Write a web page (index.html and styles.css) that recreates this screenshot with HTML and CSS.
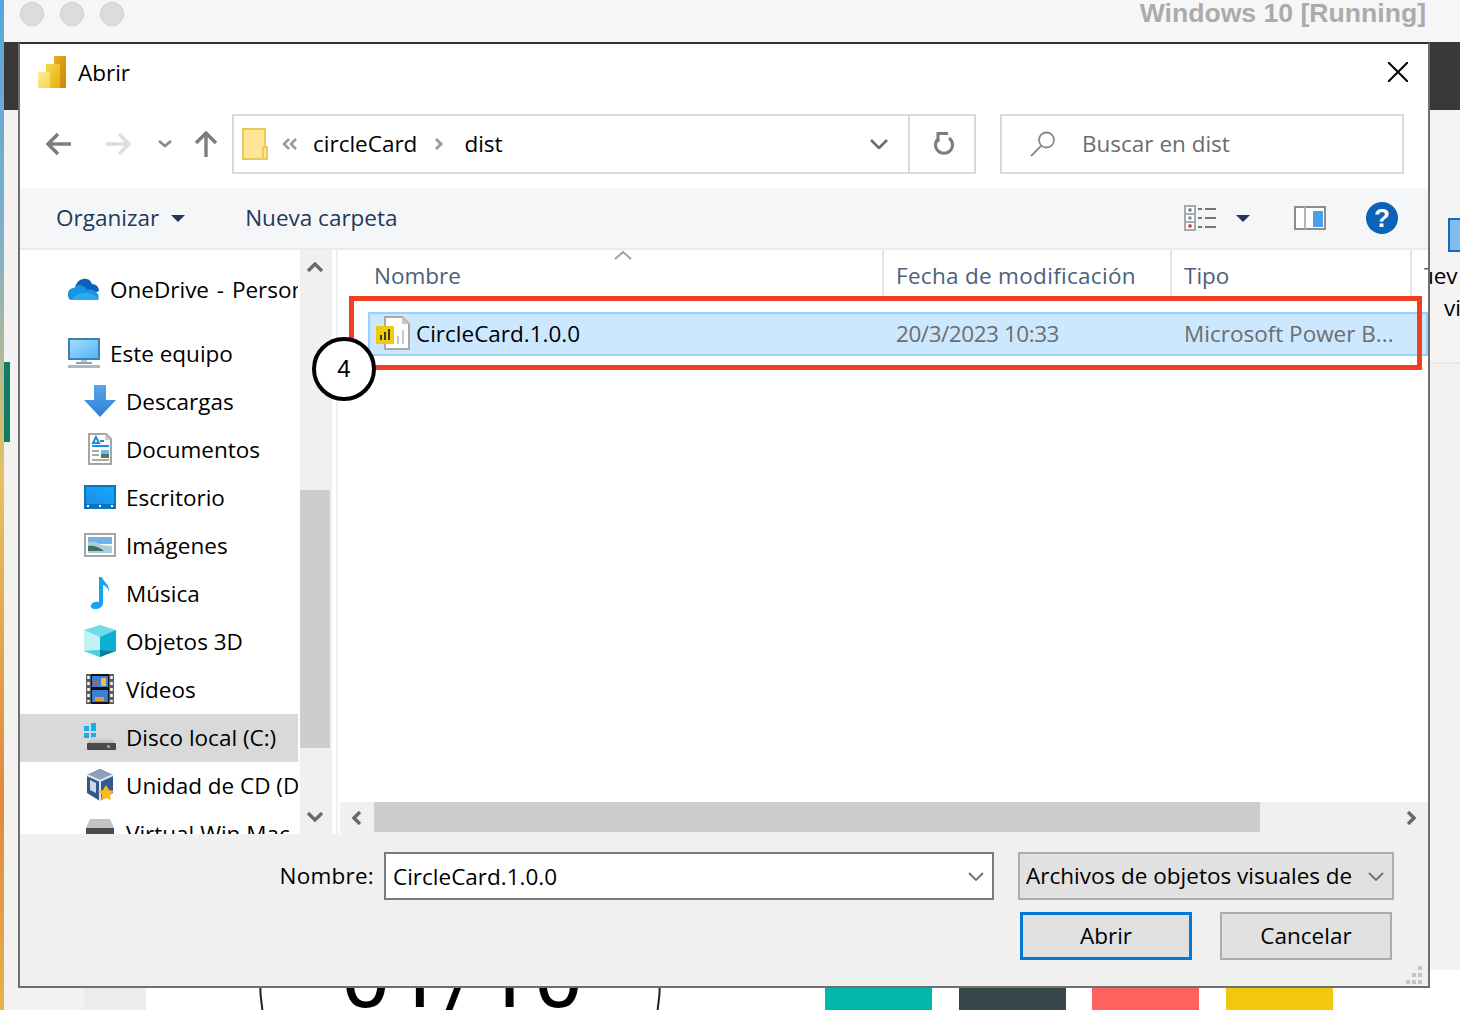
FILE: index.html
```html
<!DOCTYPE html>
<html lang="en">
<head>
    <meta charset="UTF-8">
    <meta name="viewport" content="width=device-width, initial-scale=1.0">
    <title>Abrir</title>
    <link rel="stylesheet" href="styles.css">
</head>
<body>
    <!-- host window behind the dialog -->
    <div class="host">
        <div class="host-title">
            <span class="light"></span><span class="light"></span><span class="light"></span>
            <span class="vm-name">Windows 10 [Running]</span>
        </div>
        <div class="host-ribbon"></div>
        <div class="host-report">
            <div class="side-tab"></div>
            <div class="pane-right">
                <div class="pane-box"></div>
                <div class="pane-text">Nuev<br><span class="pane-second">vi</span></div>
            </div>
            <div class="page-gutter"></div>
            <div class="page-sheet"></div>
            <div class="gauge"></div>
            <div class="big-date">01/10</div>
            <div class="tiles">
                <span class="tile teal"></span>
                <span class="tile slate"></span>
                <span class="tile coral"></span>
                <span class="tile gold"></span>
            </div>
        </div>
    </div>

    <div class="dialog">
        <div class="title-row">
            <svg class="app-icon" width="28" height="32" viewBox="0 0 28 32">
                <defs>
                    <linearGradient id="pbiDark" x1="0" y1="0" x2="1" y2="1"><stop offset="0" stop-color="#e8b020"/><stop offset="1" stop-color="#c98508"/></linearGradient>
                    <linearGradient id="pbiMid" x1="0" y1="0" x2="1" y2="1"><stop offset="0" stop-color="#f9d84c"/><stop offset="1" stop-color="#e6ae10"/></linearGradient>
                    <linearGradient id="pbiLight" x1="0" y1="0" x2="1" y2="1"><stop offset="0" stop-color="#fdec9a"/><stop offset="1" stop-color="#f6d452"/></linearGradient>
                </defs>
                <rect x="16" width="12" height="32" fill="url(#pbiDark)"/>
                <rect x="8" y="8" width="14" height="24" fill="url(#pbiMid)"/>
                <rect y="16" width="12" height="16" fill="url(#pbiLight)"/>
            </svg>
            <span class="title-text">Abrir</span>
            <svg class="close-icon" width="20" height="20" viewBox="0 0 20 20">
                <path d="M0 0 20 20M20 0 0 20" stroke="#000" stroke-width="2" fill="none"/>
            </svg>
        </div>

        <div class="nav-row">
            <svg class="nav-btn back" width="26" height="24" viewBox="0 0 26 24"><path d="M12 2 2 12l10 10M2 12h23" stroke="#7d7d7d" stroke-width="3.400" fill="none"/></svg>
            <svg class="nav-btn forward" width="26" height="24" viewBox="0 0 26 24"><path d="M14 2l10 10-10 10M24 12H1" stroke="#dedede" stroke-width="3.400" fill="none"/></svg>
            <svg class="nav-btn recent" width="14" height="8" viewBox="0 0 14 8"><path d="M1 1l6 5 6-5" stroke="#8a8a8a" stroke-width="2.800" fill="none"/></svg>
            <svg class="nav-btn up" width="24" height="26" viewBox="0 0 24 26"><path d="M2 12 12 2l10 10M12 2v24" stroke="#7d7d7d" stroke-width="3.400" fill="none"/></svg>
            <div class="address">
                <svg class="folder" width="26" height="32" viewBox="0 0 26 32">
                    <rect x="1" y="1" width="22" height="30" fill="#fde797" stroke="#eec759" stroke-width="2"/>
                    <rect x="21" y="19" width="4" height="12" fill="#fde797" stroke="#eec759" stroke-width="2"/>
                </svg>
                <svg class="crumb-back" width="16" height="12" viewBox="0 0 16 12"><path d="M7 1 2 6l5 5M14 1 9 6l5 5" stroke="#9a9a9a" stroke-width="2.600" fill="none"/></svg>
                <span class="crumb">circleCard</span>
                <svg class="crumb-sep" width="8" height="12" viewBox="0 0 8 12"><path d="M1 1l5 5-5 5" stroke="#9a9a9a" stroke-width="3" fill="none"/></svg>
                <span class="crumb">dist</span>
                <svg class="address-drop" width="18" height="10" viewBox="0 0 18 10"><path d="M1 1l8 8 8-8" stroke="#707070" stroke-width="2.800" fill="none"/></svg>
                <div class="refresh">
                    <svg width="22" height="24" viewBox="0 0 22 24"><path d="M6 6A8.500 8.500 0 1 0 16 6M5 10V1.500H15" stroke="#7d7d7d" stroke-width="3" fill="none"/></svg>
                </div>
            </div>
            <div class="search">
                <svg width="26" height="26" viewBox="0 0 26 26"><circle cx="16.500" cy="9" r="7.500" stroke="#8a8a8a" stroke-width="1.800" fill="none"/><path d="M11 15 1 25" stroke="#8a8a8a" stroke-width="1.800"/></svg>
                <span class="search-text">Buscar en dist</span>
            </div>
        </div>

        <div class="toolbar">
            <span class="tool">Organizar</span>
            <span class="caret organize-caret"></span>
            <span class="tool new-folder">Nueva carpeta</span>
            <svg class="view-icon" width="32" height="26" viewBox="0 0 32 26">
                <rect x="1" y="1" width="10" height="24" fill="#fff" stroke="#a9a9a9" stroke-width="2"/>
                <path d="M1 9h10M1 17h10" stroke="#a9a9a9" stroke-width="2"/>
                <rect x="4.500" y="3.500" width="3" height="3" fill="#6d6d6d"/>
                <rect x="4.500" y="11.500" width="3" height="3" fill="#4d8fdc"/>
                <rect x="4.500" y="19.500" width="3" height="3" fill="#c8242b"/>
                <path d="M14 4h4M21 4h11M14 13h4M21 13h11M14 22h4M21 22h11" stroke="#777" stroke-width="2"/>
            </svg>
            <span class="caret view-caret"></span>
            <svg class="pane-icon" width="32" height="24" viewBox="0 0 32 24">
                <rect x="1" y="1" width="30" height="22" fill="#fff" stroke="#8d8d8d" stroke-width="2"/>
                <rect x="10" y="1" width="2" height="22" fill="#b5b5b5"/>
                <rect x="19" y="5" width="10" height="16" fill="#4b9fe6"/>
            </svg>
            <div class="help">?</div>
        </div>

        <div class="browser">
            <div class="nav-tree">
                <div class="tree-row top onedrive">
                    <svg width="32" height="22" viewBox="0 0 32 22"><path d="M7 10c1-6 6-10 11-9 3 0 5 2 6 5 4 0 7 3 7 7L14 20z" fill="#0b62b8"/><path d="M3 22c-3-1-3-4-3-6 0-4 3-6 6-6 2-3 6-4 9-2 2 1 3 2 4 4 4-1 8 0 10 3 2 2 2 5 1 7z" fill="#1496e4"/><path d="M3 22c3-5 9-7 14-7 6 0 11 2 14 7z" fill="#2aabf0"/></svg>
                    <span>OneDrive - Personal</span>
                </div>
                <div class="tree-row top gap">
                    <svg width="32" height="30" viewBox="0 0 32 30">
                        <defs><linearGradient id="screen" x1="0" y1="0" x2="1" y2="1"><stop offset="0" stop-color="#a8dcff"/><stop offset="1" stop-color="#4fb4f8"/></linearGradient></defs>
                        <rect x="1" y="1" width="30" height="20" fill="url(#screen)" stroke="#3f7fae" stroke-width="2"/>
                        <rect x="13" y="22" width="6" height="2" fill="#b9c6d0"/>
                        <rect x="8" y="24" width="16" height="2" fill="#8aa3b5"/>
                        <rect y="27" width="32" height="3" fill="#a9b7c2"/>
                    </svg>
                    <span>Este equipo</span>
                </div>
                <div class="tree-row">
                    <svg width="32" height="32" viewBox="0 0 32 32">
                        <defs><linearGradient id="dl" x1="0" y1="0" x2="0" y2="1"><stop offset="0" stop-color="#58a6ea"/><stop offset="1" stop-color="#2d80d8"/></linearGradient></defs>
                        <path d="M10 0h12v15h10L16 32 0 15h10z" fill="url(#dl)"/>
                    </svg>
                    <span>Descargas</span>
                </div>
                <div class="tree-row">
                    <svg width="32" height="32" viewBox="0 0 32 32"><path d="M5 1h17l5 5v25H5z" fill="#fff" stroke="#a5a5a5" stroke-width="2"/><path d="M21 1v6h6z" fill="#c9c9c9"/><path d="M12 4l-3 6h6zM16 8h4" stroke="#1f8edb" stroke-width="2" fill="none"/><path d="M8 13h17" stroke="#1f8edb" stroke-width="2"/><path d="M8 18h7M8 22h7M8 27h17" stroke="#a9a9a9" stroke-width="2"/><rect x="17" y="17" width="8" height="4" fill="#74b6ea"/><rect x="17" y="21" width="8" height="4" fill="#4f7f5a"/></svg>
                    <span>Documentos</span>
                </div>
                <div class="tree-row">
                    <svg width="32" height="24" viewBox="0 0 32 24">
                        <defs><linearGradient id="desk" x1="0" y1="1" x2="1" y2="0"><stop offset="0" stop-color="#1c8fe8"/><stop offset="1" stop-color="#12a8ff"/></linearGradient></defs>
                        <rect width="32" height="24" fill="#0e73bd"/>
                        <rect x="2" y="2" width="28" height="17" fill="url(#desk)"/>
                        <rect x="3" y="20" width="2" height="2" fill="#fff"/><rect x="15" y="20" width="2" height="2" fill="#fff"/><rect x="27" y="20" width="2" height="2" fill="#fff"/>
                    </svg>
                    <span>Escritorio</span>
                </div>
                <div class="tree-row">
                    <svg width="32" height="24" viewBox="0 0 32 24"><rect x="1" y="1" width="30" height="22" fill="#fff" stroke="#a5a5a5" stroke-width="2"/><rect x="4" y="4" width="24" height="7" fill="#6fb3e8"/><path d="M4 9c6-1 10 1 14 3l10 1v7H4z" fill="#a9cfdc"/><path d="M4 13c7-1 12 2 16 5H4z" fill="#3f6f5c"/></svg>
                    <span>Imágenes</span>
                </div>
                <div class="tree-row">
                    <svg width="24" height="32" viewBox="0 0 24 32"><path d="M11 0h3c1 5 8 7 7 15-1-4-3-6-6-7v18c0 4-4 6-8 6-3 0-5-2-4-4 1-3 5-4 8-3z" fill="#17a2f5"/></svg>
                    <span>Música</span>
                </div>
                <div class="tree-row">
                    <svg width="32" height="32" viewBox="0 0 32 32"><path d="M16 0 32 5v21l-16 6L0 26V5z" fill="#72dbe8"/><path d="M0 5l16 7v13L0 26z" fill="#c4f1f3"/><path d="M32 5l-16 7v13l16 1z" fill="#0cb0d4"/><path d="M16 25l16 1-16 6z" fill="#0a7c9c"/><path d="M16 25 0 26l16 6z" fill="#4fd0de"/></svg>
                    <span>Objetos 3D</span>
                </div>
                <div class="tree-row">
                    <svg width="28" height="30" viewBox="0 0 28 30"><rect width="28" height="30" fill="#5d5d5d"/><rect x="5" width="18" height="30" fill="#111"/><rect x="6" y="2" width="16" height="11" fill="#3c7fd6"/><rect x="6" y="16" width="16" height="12" fill="#3c7fd6"/><rect x="8" y="7" width="4" height="5" fill="#d8503f"/><rect x="15" y="4" width="5" height="8" fill="#e8c23a"/><rect x="9" y="23" width="9" height="4" fill="#e0a02f"/><path d="M2.500 2v26M25.500 2v26" stroke="#fff" stroke-width="2.400" stroke-dasharray="3 3"/></svg>
                    <span>Vídeos</span>
                </div>
                <div class="tree-row selected">
                    <svg width="32" height="28" viewBox="0 0 32 28">
                        <defs><linearGradient id="drive" x1="0" y1="0" x2="0" y2="1"><stop offset="0" stop-color="#dcdcdc"/><stop offset="1" stop-color="#b5b5b5"/></linearGradient></defs>
                        <path d="M0 3h5v5H0zM7 0h5v8H7zM0 10h5v5H0zM7 10h5v5H7z" fill="#12aef0"/>
                        <path d="M8 14h19l4 7H3z" fill="url(#drive)"/>
                        <rect x="3" y="20" width="29" height="7" rx="1" fill="#4a4a4a"/>
                        <rect x="23" y="22" width="3" height="3" fill="#34d058"/>
                    </svg>
                    <span>Disco local (C:)</span>
                </div>
                <div class="tree-row">
                    <svg width="30" height="32" viewBox="0 0 30 32"><path d="M15 0 28 6v18l-13 8L2 24V6z" fill="#33588e"/><path d="M15 0 28 6 15 12 2 6z" fill="#8aa0bd"/><path d="M15 12v20M2 6l13 6 13-6" stroke="#dfe6ef" stroke-width="2" fill="none"/><path d="M5 11l6 3v10l-6-3z" fill="#cfd8e4"/><path d="M21 16l3 5 5 1-4 4 1 5-5-2-5 2 1-5-4-4 5-1z" fill="#f9b824"/></svg>
                    <span>Unidad de CD (D:)</span>
                </div>
                <div class="tree-row">
                    <svg width="28" height="28" viewBox="0 0 28 28"><path d="M4 0h20l4 9H0z" fill="#c4c4c4"/><rect y="9" width="28" height="8" fill="#4a4a4a"/></svg>
                    <span>Virtual Win Mac</span>
                </div>
            </div>
            <div class="v-scroll">
                <svg class="v-arrow" width="16" height="10" viewBox="0 0 16 10"><path d="M1 9l7-7 7 7" stroke="#6a6a6a" stroke-width="3.400" fill="none"/></svg>
                <div class="v-thumb"></div>
                <svg class="v-arrow down" width="16" height="10" viewBox="0 0 16 10"><path d="M1 1l7 7 7-7" stroke="#6a6a6a" stroke-width="3.400" fill="none"/></svg>
            </div>
            <div class="split"></div>
            <div class="files">
                <div class="file-head">
                    <div class="col first">Nombre
                        <svg class="sort" width="18" height="10" viewBox="0 0 18 10"><path d="M1 9l8-7 8 7" stroke="#a0a0a0" stroke-width="2" fill="none"/></svg>
                    </div>
                    <div class="col date-col">Fecha de modificación</div>
                    <div class="col">Tipo</div>
                    <div class="col last">Tamaño</div>
                </div>
                <div class="file-row">
                    <div class="file-name">
                        <svg width="34" height="34" viewBox="0 0 34 34">
                            <path d="M9 1h17l7 7v25H9z" fill="#fff" stroke="#a9a9a9" stroke-width="2"/>
                            <path d="M26 1v7h7z" fill="#c9c9c9"/>
                            <path d="M27 14v14M22 20v8" stroke="#c9c9c9" stroke-width="2"/>
                            <rect y="10" width="18" height="18" fill="#f2c811"/>
                            <path d="M5 19v5M9 16v8M13 13v11" stroke="#3d3d1f" stroke-width="2"/>
                        </svg>
                        <span>CircleCard.1.0.0</span>
                    </div>
                    <div class="file-meta file-date">20/3/2023 10:33</div>
                    <div class="file-meta">Microsoft Power B...</div>
                </div>
                <div class="file-space"></div>
                <div class="h-scroll">
                    <svg class="h-arrow" width="10" height="14" viewBox="0 0 10 14"><path d="M8 1 2 7l6 6" stroke="#6a6a6a" stroke-width="3.400" fill="none"/></svg>
                    <div class="h-thumb"></div>
                    <svg class="h-arrow end" width="10" height="14" viewBox="0 0 10 14"><path d="M2 1l6 6-6 6" stroke="#6a6a6a" stroke-width="3.400" fill="none"/></svg>
                </div>
            </div>
        </div>

        <div class="footer">
            <div class="footer-line">
                <span class="name-label">Nombre:</span>
                <div class="name-input">
                    <span>CircleCard.1.0.0</span>
                    <svg width="16" height="9" viewBox="0 0 16 9"><path d="M1 1l7 7 7-7" stroke="#707070" stroke-width="1.800" fill="none"/></svg>
                </div>
                <div class="type-select">
                    <span class="type-text">Archivos de objetos visuales de</span>
                    <svg width="16" height="9" viewBox="0 0 16 9"><path d="M1 1l7 7 7-7" stroke="#707070" stroke-width="1.800" fill="none"/></svg>
                </div>
            </div>
            <div class="footer-buttons">
                <div class="btn primary">Abrir</div>
                <div class="btn">Cancelar</div>
            </div>
            <svg class="grip" width="18" height="18" viewBox="0 0 18 18"><path d="M12 0h4v4h-4zM6 7h4v4H6zM12 7h4v4h-4zM0 14h4v4H0zM6 14h4v4H6zM12 14h4v4h-4z" fill="#c4c4c4"/></svg>
        </div>

        <!-- annotation on top of the file row -->
        <div class="callout"></div>
        <div class="step">4</div>
    </div>
</body>
</html>
```

FILE: styles.css
```css
html {
    overflow: hidden;
}

body {
    margin: 0;
    width: 1460px;
    height: 1010px;
    position: relative;
    overflow: hidden;
    background: linear-gradient(to bottom, #5aa5dc 0, #7fb0c8 240px, #e5c25f 480px, #e08a3a 800px, #e5b04f 1010px);
    font-family: "Open Sans", "Noto Sans", sans-serif;
    font-size: 22.5px;
    color: #000;
}

.host {
    margin-left: 4px;
    height: 1010px;
    display: flex;
    flex-direction: column;
}

.host-title {
    height: 42px;
    flex: none;
    background: #f6f6f6;
    display: flex;
    align-items: flex-start;
    gap: 16px;
    padding: 2px 34px 0 16px;
    box-sizing: border-box;
}

.light {
    width: 24px;
    height: 24px;
    border-radius: 50%;
    background: #dcdcdc;
    border: 1px solid #c9c9c9;
    box-sizing: border-box;
}

.vm-name {
    margin-left: auto;
    font-family: "Liberation Sans", sans-serif;
    font-weight: bold;
    font-size: 26.6px;
    line-height: 22px;
    color: #ababab;
}

.host-ribbon {
    height: 68px;
    flex: none;
    background: #3a3836;
}

.host-report {
    flex: 1;
    position: relative;
    overflow: hidden;
    background: #f3f2f1;
}

.side-tab {
    position: absolute;
    left: 0;
    top: 252px;
    width: 6px;
    height: 80px;
    background: #107c68;
}

.pane-right {
    position: absolute;
    left: 1426px;
    top: 0;
    width: 30px;
    height: 252px;
    background: #f5f4f3;
    border-bottom: 2px solid #e8e8e8;
    overflow: hidden;
}

.pane-box {
    position: absolute;
    left: 18px;
    top: 108px;
    width: 14px;
    height: 30px;
    background: #83bbec;
    border: 2px solid #0f6cbd;
}

.pane-text {
    position: absolute;
    left: -27px;
    top: 150px;
    font-size: 22.5px;
    line-height: 32px;
    white-space: nowrap;
}

.pane-second {
    margin-left: 41px;
}

.page-gutter {
    position: absolute;
    left: 80px;
    top: 860px;
    width: 62px;
    height: 40px;
    background: #ececec;
}

.page-sheet {
    position: absolute;
    left: 142px;
    top: 860px;
    right: 0;
    height: 40px;
    background: #fff;
}

.gauge {
    position: absolute;
    left: 255px;
    top: 668px;
    width: 402px;
    height: 402px;
    border: 2px solid #222;
    border-radius: 50%;
    box-sizing: border-box;
}

.big-date {
    position: absolute;
    left: 337px;
    top: 823px;
    font-family: Roboto, sans-serif;
    font-size: 88px;
    line-height: 88px;
    letter-spacing: 2px;
    color: #000;
    white-space: nowrap;
}

.tiles {
    position: absolute;
    left: 821px;
    top: 870px;
    display: flex;
    gap: 26.5px;
}

.tile {
    width: 107px;
    height: 30px;
}

.teal { background: #01b8aa; }
.slate { background: #374649; }
.coral { background: #fd625e; }
.gold { background: #f2c80f; }

/* dialog */
.dialog {
    position: absolute;
    left: 18px;
    top: 42px;
    width: 1412px;
    height: 946px;
    box-sizing: border-box;
    border: 2px solid #6f6f6f;
    border-top-color: #333;
    background: #fff;
    display: flex;
    flex-direction: column;
}

.title-row {
    height: 56px;
    flex: none;
    display: flex;
    align-items: center;
    padding: 0 20px 0 18px;
}

.title-text {
    margin: 0 0 0 12px;
}

.close-icon {
    margin-left: auto;
}

.nav-row {
    height: 88px;
    flex: none;
    display: flex;
    align-items: center;
    padding: 0 24px 0 26px;
    box-sizing: border-box;
}

.nav-btn {
    flex: none;
}

.forward { margin-left: 33px; }
.recent { margin-left: 27px; }
.up { margin-left: 22px; }

.address {
    margin-left: 14px;
    width: 744px;
    height: 60px;
    box-sizing: border-box;
    border: 2px solid #d9d9d9;
    display: flex;
    align-items: center;
    padding-left: 8px;
}

.crumb-back { margin-left: 14px; }
.crumb { margin-left: 15px; padding-bottom: 2px; }
.crumb-sep { margin-left: 18px; margin-right: 6px; }

.address-drop {
    margin-left: auto;
    margin-right: 20px;
}

.refresh {
    width: 66px;
    height: 100%;
    box-sizing: border-box;
    border-left: 2px solid #d9d9d9;
    padding-left: 4px;
    display: flex;
    align-items: center;
    justify-content: center;
}

.search {
    margin-left: 24px;
    width: 404px;
    height: 60px;
    box-sizing: border-box;
    border: 2px solid #d9d9d9;
    display: flex;
    align-items: center;
    gap: 26px;
    padding-left: 28px;
    color: #6d6d6d;
}

.search-text {
    padding-bottom: 2px;
}

.toolbar {
    height: 62px;
    flex: none;
    box-sizing: border-box;
    background: #f5f6f7;
    border-bottom: 2px solid #e9ebee;
    display: flex;
    align-items: center;
    padding: 0 30px 0 36px;
}

.tool {
    color: #1e395b;
    padding-bottom: 2px;
}

.caret {
    width: 0;
    height: 0;
    border-left: 7px solid transparent;
    border-right: 7px solid transparent;
    border-top: 7px solid #1e395b;
}

.organize-caret { margin-left: 12px; }
.new-folder { margin-left: 60px; }
.view-icon { margin-left: auto; }
.view-caret { margin-left: 20px; }
.pane-icon { margin-left: 44px; }

.help {
    margin-left: 40px;
    width: 32px;
    height: 32px;
    border-radius: 50%;
    background: #0a63b8;
    color: #fff;
    font-family: "Liberation Sans", sans-serif;
    font-weight: bold;
    font-size: 26px;
    line-height: 32px;
    text-align: center;
}

.browser {
    flex: 1;
    min-height: 0;
    display: grid;
    grid-template-columns: 280px 32px 6px 1fr;
}

.nav-tree {
    overflow: hidden;
    padding-top: 16px;
}

.tree-row {
    width: 278px;
    height: 48px;
    display: flex;
    align-items: center;
    padding: 0 0 2px 64px;
    box-sizing: border-box;
    overflow: hidden;
    white-space: nowrap;
}

.tree-row svg {
    flex: none;
    width: 32px;
    margin-right: 10px;
}

.tree-row.top {
    padding-left: 48px;
}

.tree-row.gap {
    margin-top: 16px;
}

.tree-row.onedrive {
    word-spacing: 2px;
}

.tree-row.selected {
    background: #d9d9d9;
}

.v-scroll {
    background: #f0f0f0;
    display: flex;
    flex-direction: column;
    align-items: center;
}

.v-arrow {
    flex: none;
    margin: 12px 2px 0 0;
}

.v-arrow.down {
    margin-top: auto;
    margin-bottom: 12px;
}

.v-thumb {
    flex: none;
    width: 30px;
    height: 258px;
    margin: 218px 2px 0 0;
    background: #cdcdcd;
}

.split {
    background: linear-gradient(to right, #fff 4px, #f0f0f0 4px);
}

.files {
    display: flex;
    flex-direction: column;
    min-width: 0;
    overflow: hidden;
}

.file-head {
    height: 48px;
    flex: none;
    display: grid;
    grid-template-columns: 546px 288px 240px 1fr;
    color: #4c607a;
    white-space: nowrap;
}

.col {
    display: flex;
    align-items: center;
    padding: 2px 0 0 12px;
    border-right: 2px solid #e5e5e5;
    box-sizing: border-box;
    position: relative;
}

.col.first {
    padding-left: 36px;
}

.col.date-col {
    letter-spacing: 0.3px;
}

.col.last {
    padding-left: 12px;
    border-right: 0;
    overflow: hidden;
}

.sort {
    position: absolute;
    left: 276px;
    top: 0;
}

.file-row {
    height: 44px;
    flex: none;
    margin: 14px 0 0 30px;
    padding-bottom: 2px;
    box-sizing: border-box;
    background: #cce8ff;
    border: 2px solid #99d1ff;
    display: grid;
    grid-template-columns: 514px 288px 1fr;
    align-items: center;
    white-space: nowrap;
}

.file-name {
    display: flex;
    align-items: center;
    gap: 6px;
    padding-left: 6px;
}

.file-meta {
    padding-left: 12px;
    color: #6d6d6d;
}

.file-date {
    letter-spacing: -0.45px;
}

.file-space {
    flex: 1;
}

.h-scroll {
    height: 32px;
    flex: none;
    margin-left: 2px;
    background: #f0f0f0;
    display: flex;
    align-items: flex-start;
}

.h-arrow {
    flex: none;
    margin: 9px 12px 0;
}

.h-thumb {
    width: 886px;
    height: 30px;
    background: #cdcdcd;
}

.h-arrow.end {
    margin-left: auto;
}

.footer {
    height: 152px;
    flex: none;
    position: relative;
    background: #f0f0f0;
    padding: 18px 34px 0 0;
    box-sizing: border-box;
}

.footer-line {
    display: flex;
    align-items: center;
    justify-content: flex-end;
}

.name-input,
.type-select {
    height: 48px;
    box-sizing: border-box;
    display: flex;
    align-items: center;
    justify-content: space-between;
    white-space: nowrap;
}

.name-label {
    margin-right: 10px;
    padding-bottom: 2px;
    letter-spacing: 0.25px;
}

.name-input {
    width: 610px;
    border: 2px solid #7a7a7a;
    background: #fff;
    padding: 1px 8px 0 7px;
}

.type-select {
    width: 376px;
    margin-left: 24px;
    border: 2px solid #adadad;
    background: #e1e1e1;
    padding: 0 8px 0 6px;
    overflow: hidden;
}

.type-text {
    padding-bottom: 2px;
}

.footer-buttons {
    display: flex;
    justify-content: flex-end;
    gap: 28px;
    margin-top: 12px;
    padding-right: 2px;
}

.btn {
    width: 172px;
    height: 48px;
    box-sizing: border-box;
    border: 2px solid #adadad;
    background: #e1e1e1;
    padding-bottom: 2px;
    display: flex;
    align-items: center;
    justify-content: center;
}

.btn.primary {
    border: 3px solid #0078d7;
}

.grip {
    position: absolute;
    right: 4px;
    bottom: 2px;
}

.callout {
    position: absolute;
    left: 329px;
    top: 252px;
    width: 1073px;
    height: 74px;
    box-sizing: border-box;
    border: 5px solid #ee4123;
}

.step {
    position: absolute;
    left: 292px;
    top: 293px;
    width: 64px;
    height: 64px;
    box-sizing: border-box;
    border: 4px solid #000;
    border-radius: 50%;
    background: #fff;
    display: flex;
    align-items: center;
    justify-content: center;
    font-family: "Liberation Sans", sans-serif;
    font-size: 24px;
}
```
